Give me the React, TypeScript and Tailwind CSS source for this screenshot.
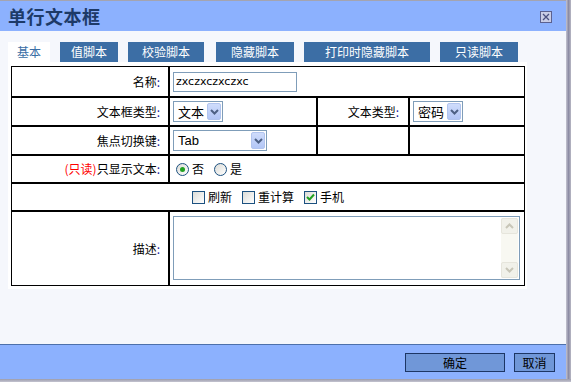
import React from 'react'

const cjk = { fontFamily: '"Noto Sans CJK SC", "Noto Sans", sans-serif' }

function Chevron({ up = false, color = '#4d6185' }: { up?: boolean; color?: string }) {
  return (
    <svg width="9" height="6" viewBox="0 0 9 6">
      <path
        d={up ? 'M1 5 L4.5 1.5 L8 5' : 'M1 1 L4.5 4.5 L8 1'}
        fill="none"
        stroke={color}
        strokeWidth="2"
      />
    </svg>
  )
}

function Select({ text, width, latin = false }: { text: string; width: string; latin?: boolean }) {
  return (
    <div className={`${width} h-[21px] border border-[#7f9db9] bg-white flex items-center justify-between pl-[4px] pr-[1px]`}>
      <span
        className="text-[13px] text-black leading-none"
        style={latin ? { fontFamily: '"Liberation Sans", Arial, sans-serif' } : cjk}
      >
        {text}
      </span>
      <div className="w-[14px] h-[17px] rounded-[2px] border border-[#b1c4ee] bg-gradient-to-b from-[#cfdcfb] to-[#b2c6f6] flex items-center justify-center">
        <Chevron />
      </div>
    </div>
  )
}

function Radio({ checked }: { checked?: boolean }) {
  return (
    <div className="w-[13px] h-[13px] rounded-full border border-[#1c5180] bg-gradient-to-br from-[#dcdcd7] to-white flex items-center justify-center">
      {checked && <div className="w-[5px] h-[5px] rounded-full bg-[#21a121]" />}
    </div>
  )
}

function Checkbox({ checked }: { checked?: boolean }) {
  return (
    <div className="w-[13px] h-[13px] border border-[#1c5180] bg-gradient-to-br from-[#dcdcd7] to-white flex items-center justify-center">
      {checked && (
        <svg width="9" height="8" viewBox="0 0 9 8">
          <path d="M1 4 L3.5 6.5 L8 1.5" fill="none" stroke="#21a121" strokeWidth="2" />
        </svg>
      )}
    </div>
  )
}

function Label({ children }: { children: React.ReactNode }) {
  return (
    <div className="w-[158px] border-r-2 border-black flex items-center justify-end pr-[8px] text-[12px] text-black" style={cjk}>
      {children}
      <span className="text-[#2020a0]">:</span>
    </div>
  )
}

const tabs = [
  { name: '值脚本', w: 'w-[58px]', ml: 'ml-[10px]' },
  { name: '校验脚本', w: 'w-[76px]', ml: 'ml-[10px]' },
  { name: '隐藏脚本', w: 'w-[78px]', ml: 'ml-[12px]' },
  { name: '打印时隐藏脚本', w: 'w-[126px]', ml: 'ml-[10px]' },
  { name: '只读脚本', w: 'w-[78px]', ml: 'ml-[10px]' },
]

export default function App() {
  return (
    <div className="w-[571px] h-[382px] flex flex-col bg-[#a9a9b8]" style={cjk}>
      <div className="flex h-[379px]">
        <div className="w-[566px] flex flex-col border-t border-[#a4a4b0]">
          {/* title bar */}
          <div className="h-[30px] bg-[#8cb1fe] flex items-center justify-between pl-[8px] pr-[14px]">
            <span className="text-[18px] font-bold text-[#1d3a68] leading-none tracking-[0.5px]">单行文本框</span>
            <svg width="12" height="12" viewBox="0 0 12 12" className="mt-[1px]">
              <rect x="0.5" y="0.5" width="11" height="11" fill="#c9cde6" stroke="#5b6190" />
              <path d="M3 3 L9 9 M9 3 L3 9" stroke="#4a5080" strokeWidth="1.3" />
            </svg>
          </div>

          {/* body */}
          <div className="flex-1 bg-[#f5f7fc] pl-[8px] pt-[11px]">
            <div className="flex h-[20px] text-[12px]">
              <div className="w-[42px] bg-white text-[#3a6ea5] flex items-center justify-center">基本</div>
              {tabs.map((t) => (
                <div key={t.name} className={`${t.w} ${t.ml} bg-[#3c6ea5] text-white flex items-center justify-center`}>
                  {t.name}
                </div>
              ))}
            </div>

            <div className="w-[519px] h-[227px] bg-white pl-[3px] pt-[4px]">
              <div className="w-[514px] border border-black flex flex-col">
                {/* row 1 */}
                <div className="flex h-[31px] border-b-2 border-black">
                  <Label>名称</Label>
                  <div className="flex-1 flex items-center pl-[3px]">
                    <div className="w-[124px] h-[20px] border border-[#7f9db9] flex items-center pl-[2px]">
                      <span className="text-[11px] text-black leading-none" style={{ fontFamily: '"DejaVu Sans", Verdana, sans-serif' }}>
                        zxczxczxczxc
                      </span>
                    </div>
                  </div>
                </div>

                {/* row 2 */}
                <div className="flex h-[29px] border-b-2 border-black">
                  <Label>文本框类型</Label>
                  <div className="w-[148px] border-r-2 border-black flex items-center pl-[3px]">
                    <Select text="文本" width="w-[50px]" />
                  </div>
                  <div className="w-[92px] border-r-2 border-black flex items-center justify-end pr-[9px] text-[12px] text-black">
                    文本类型<span className="text-[#2020a0]">:</span>
                  </div>
                  <div className="flex-1 flex items-center pl-[3px]">
                    <Select text="密码" width="w-[50px]" />
                  </div>
                </div>

                {/* row 3 */}
                <div className="flex h-[29px] border-b-2 border-black">
                  <Label>焦点切换键</Label>
                  <div className="w-[148px] border-r-2 border-black flex items-center pl-[3px]">
                    <Select text="Tab" width="w-[94px]" latin />
                  </div>
                  <div className="w-[92px] border-r-2 border-black" />
                  <div className="flex-1" />
                </div>

                {/* row 4 */}
                <div className="flex h-[28px] border-b-2 border-black">
                  <Label>
                    <span className="text-[#ff0000]">(只读)</span>只显示文本
                  </Label>
                  <div className="flex-1 flex items-center pl-[6px] text-[12px] text-black">
                    <Radio checked />
                    <span className="ml-[3px]">否</span>
                    <span className="ml-[10px]"><Radio /></span>
                    <span className="ml-[3px]">是</span>
                  </div>
                </div>

                {/* row 5 */}
                <div className="flex h-[28px] border-b-2 border-black items-center justify-center text-[12px] text-black">
                  <Checkbox />
                  <span className="ml-[3px]">刷新</span>
                  <span className="ml-[10px]"><Checkbox /></span>
                  <span className="ml-[3px]">重计算</span>
                  <span className="ml-[10px]"><Checkbox checked /></span>
                  <span className="ml-[3px]">手机</span>
                </div>

                {/* row 6 */}
                <div className="flex h-[73px]">
                  <Label>描述</Label>
                  <div className="flex-1 pl-[3px] pt-[4px]">
                    <div className="w-[347px] h-[64px] border border-[#7f9db9] flex justify-end p-[1px]">
                      <div className="w-[17px] h-full bg-[#f8f8f2] flex flex-col justify-between">
                        <div className="h-[16px] border border-[#e6e5dc] bg-[#f1f1ea] rounded-[2px] flex items-center justify-center">
                          <Chevron up color="#c8c6b8" />
                        </div>
                        <div className="h-[16px] border border-[#e6e5dc] bg-[#f1f1ea] rounded-[2px] flex items-center justify-center">
                          <Chevron color="#c8c6b8" />
                        </div>
                      </div>
                    </div>
                  </div>
                </div>
              </div>
            </div>
          </div>

          {/* footer */}
          <div className="h-[35px] bg-[#8cb1fe] border-t border-[#4d70aa] flex items-start justify-end pt-[8px] pr-[11px] text-[12px] text-black">
            <div className="w-[100px] h-[19px] bg-[#7097d8] border border-[#1d3665] flex items-center justify-center">确定</div>
            <div className="w-[41px] h-[19px] ml-[9px] bg-[#7097d8] border border-[#1d3665] flex items-center justify-center">取消</div>
          </div>
        </div>
        <div className="w-[5px] bg-gradient-to-r from-[#c4c4d0] via-[#8c8ca4] to-[#b8b8c4]" />
      </div>
      <div className="h-[3px] bg-gradient-to-b from-[#9c9cac] to-[#c4c4d0]" />
    </div>
  )
}
